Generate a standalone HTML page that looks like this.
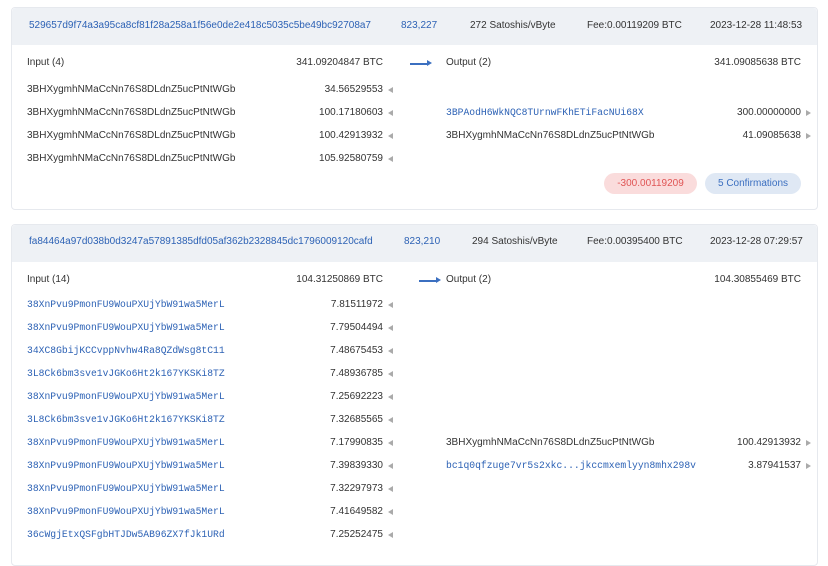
<!DOCTYPE html>
<html><head><meta charset="utf-8"><style>
body{margin:0;width:828px;height:548px;overflow:hidden;background:#fff;font-family:"Liberation Sans",sans-serif;font-size:10px;color:#333;position:relative}
.card{position:absolute;left:11px;width:805px;border:1px solid #e6e9ee;border-radius:4px;background:#fff}
.hd{position:absolute;left:0;right:0;top:0;height:37px;background:#eef1f5;border-radius:4px 4px 0 0}
.t{position:absolute;white-space:nowrap;line-height:12px}
.b{color:#2d62b5}
.m{font-family:"Liberation Mono",monospace;font-size:9.7px;color:#2d62b5}
.r{text-align:right}
.tri{position:absolute;width:0;height:0;border-top:3.5px solid transparent;border-bottom:3.5px solid transparent}
.tl{border-right:5px solid #aaa}
.tr{border-left:5px solid #aaa}
.arr{position:absolute;width:18px;height:1.5px;background:#3b6fc0}
.arr:after{content:"";position:absolute;right:-4px;top:-3px;border-top:3.5px solid transparent;border-bottom:3.5px solid transparent;border-left:5px solid #3b6fc0}
.pill{position:absolute;height:21px;border-radius:11px;line-height:21px;text-align:center;font-size:10px}
</style></head><body>

<div class="card" style="top:7px;height:201px">
 <div class="hd"></div>
</div>
<div class="t b" style="left:29px;top:20px">529657d9f74a3a95ca8cf81f28a258a1f56e0de2e418c5035c5be49bc92708a7</div>
<div class="t b" style="left:401px;top:20px">823,227</div>
<div class="t" style="left:470px;top:20px">272 Satoshis/vByte</div>
<div class="t" style="left:587px;top:20px">Fee:0.00119209 BTC</div>
<div class="t" style="left:710px;top:20px">2023-12-28 11:48:53</div>

<div class="t" style="left:27px;top:57px">Input (4)</div>
<div class="t r" style="right:445px;top:57px">341.09204847 BTC</div>
<div class="arr" style="left:410px;top:63px"></div>
<div class="t" style="left:446px;top:57px">Output (2)</div>
<div class="t r" style="right:27px;top:57px">341.09085638 BTC</div>

<div class="t" style="left:27px;top:84px">3BHXygmhNMaCcNn76S8DLdnZ5ucPtNtWGb</div><div class="t r" style="right:445px;top:84px">34.56529553</div><div class="tri tl" style="left:388px;top:87px"></div>
<div class="t" style="left:27px;top:107px">3BHXygmhNMaCcNn76S8DLdnZ5ucPtNtWGb</div><div class="t r" style="right:445px;top:107px">100.17180603</div><div class="tri tl" style="left:388px;top:110px"></div>
<div class="t" style="left:27px;top:130px">3BHXygmhNMaCcNn76S8DLdnZ5ucPtNtWGb</div><div class="t r" style="right:445px;top:130px">100.42913932</div><div class="tri tl" style="left:388px;top:133px"></div>
<div class="t" style="left:27px;top:153px">3BHXygmhNMaCcNn76S8DLdnZ5ucPtNtWGb</div><div class="t r" style="right:445px;top:153px">105.92580759</div><div class="tri tl" style="left:388px;top:156px"></div>

<div class="t m" style="left:446px;top:107px">3BPAodH6WkNQC8TUrnwFKhETiFacNUi68X</div><div class="t r" style="right:27px;top:107px">300.00000000</div><div class="tri tr" style="left:806px;top:110px"></div>
<div class="t" style="left:446px;top:130px">3BHXygmhNMaCcNn76S8DLdnZ5ucPtNtWGb</div><div class="t r" style="right:27px;top:130px">41.09085638</div><div class="tri tr" style="left:806px;top:133px"></div>

<div class="pill" style="left:604px;top:173px;width:93px;background:#fadcdc;color:#e05555">-300.00119209</div>
<div class="pill" style="left:705px;top:173px;width:96px;background:#dfe8f4;color:#3b6fc0">5 Confirmations</div>

<div class="card" style="top:224px;height:340px">
 <div class="hd"></div>
</div>
<div class="t b" style="left:29px;top:236px">fa84464a97d038b0d3247a57891385dfd05af362b2328845dc1796009120cafd</div>
<div class="t b" style="left:404px;top:236px">823,210</div>
<div class="t" style="left:472px;top:236px">294 Satoshis/vByte</div>
<div class="t" style="left:587px;top:236px">Fee:0.00395400 BTC</div>
<div class="t" style="left:710px;top:236px">2023-12-28 07:29:57</div>

<div class="t" style="left:27px;top:274px">Input (14)</div>
<div class="t r" style="right:445px;top:274px">104.31250869 BTC</div>
<div class="arr" style="left:419px;top:280px"></div>
<div class="t" style="left:446px;top:274px">Output (2)</div>
<div class="t r" style="right:27px;top:274px">104.30855469 BTC</div>

<div class="t m" style="left:27px;top:299px">38XnPvu9PmonFU9WouPXUjYbW91wa5MerL</div><div class="t r" style="right:445px;top:299px">7.81511972</div><div class="tri tl" style="left:388px;top:302px"></div>
<div class="t m" style="left:27px;top:322px">38XnPvu9PmonFU9WouPXUjYbW91wa5MerL</div><div class="t r" style="right:445px;top:322px">7.79504494</div><div class="tri tl" style="left:388px;top:325px"></div>
<div class="t m" style="left:27px;top:345px">34XC8GbijKCCvppNvhw4Ra8QZdWsg8tC11</div><div class="t r" style="right:445px;top:345px">7.48675453</div><div class="tri tl" style="left:388px;top:348px"></div>
<div class="t m" style="left:27px;top:368px">3L8Ck6bm3sve1vJGKo6Ht2k167YKSKi8TZ</div><div class="t r" style="right:445px;top:368px">7.48936785</div><div class="tri tl" style="left:388px;top:371px"></div>
<div class="t m" style="left:27px;top:391px">38XnPvu9PmonFU9WouPXUjYbW91wa5MerL</div><div class="t r" style="right:445px;top:391px">7.25692223</div><div class="tri tl" style="left:388px;top:394px"></div>
<div class="t m" style="left:27px;top:414px">3L8Ck6bm3sve1vJGKo6Ht2k167YKSKi8TZ</div><div class="t r" style="right:445px;top:414px">7.32685565</div><div class="tri tl" style="left:388px;top:417px"></div>
<div class="t m" style="left:27px;top:437px">38XnPvu9PmonFU9WouPXUjYbW91wa5MerL</div><div class="t r" style="right:445px;top:437px">7.17990835</div><div class="tri tl" style="left:388px;top:440px"></div>
<div class="t m" style="left:27px;top:460px">38XnPvu9PmonFU9WouPXUjYbW91wa5MerL</div><div class="t r" style="right:445px;top:460px">7.39839330</div><div class="tri tl" style="left:388px;top:463px"></div>
<div class="t m" style="left:27px;top:483px">38XnPvu9PmonFU9WouPXUjYbW91wa5MerL</div><div class="t r" style="right:445px;top:483px">7.32297973</div><div class="tri tl" style="left:388px;top:486px"></div>
<div class="t m" style="left:27px;top:506px">38XnPvu9PmonFU9WouPXUjYbW91wa5MerL</div><div class="t r" style="right:445px;top:506px">7.41649582</div><div class="tri tl" style="left:388px;top:509px"></div>
<div class="t m" style="left:27px;top:529px">36cWgjEtxQSFgbHTJDw5AB96ZX7fJk1URd</div><div class="t r" style="right:445px;top:529px">7.25252475</div><div class="tri tl" style="left:388px;top:532px"></div>

<div class="t" style="left:446px;top:437px">3BHXygmhNMaCcNn76S8DLdnZ5ucPtNtWGb</div><div class="t r" style="right:27px;top:437px">100.42913932</div><div class="tri tr" style="left:806px;top:440px"></div>
<div class="t m" style="left:446px;top:460px">bc1q0qfzuge7vr5s2xkc...jkccmxemlyyn8mhx298v</div><div class="t r" style="right:27px;top:460px">3.87941537</div><div class="tri tr" style="left:806px;top:463px"></div>

</body></html>
